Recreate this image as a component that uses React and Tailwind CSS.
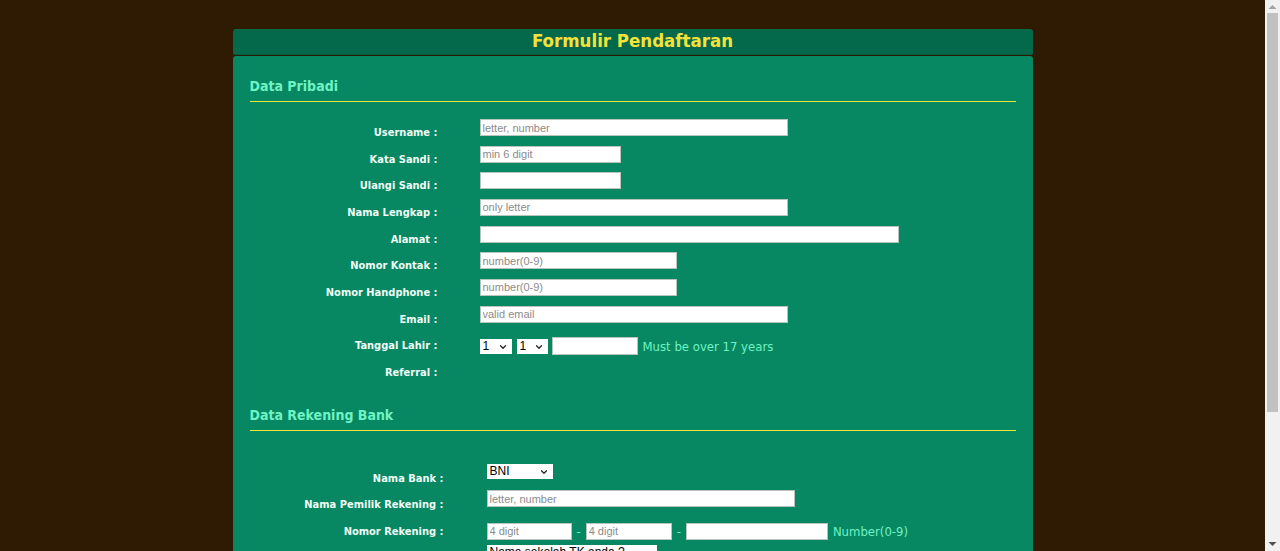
import { ChevronDown } from 'lucide-react';

const tahoma = { fontFamily: '"DejaVu Sans Condensed", "DejaVu Sans", sans-serif' };

const Select = ({ value, width }) => (
    <div className={`relative inline-flex items-center bg-white h-[15px] ${width}`}>
        <span className="pl-[3px] text-[12px] leading-none text-black font-['Liberation_Sans',sans-serif] whitespace-nowrap">{value}</span>
        <ChevronDown size={10} strokeWidth={3} className="absolute right-[4px] top-[3px] text-neutral-800" />
    </div>
);

const Input = ({ placeholder = '', width, height = 'h-[17px]' }) => (
    <input
        type="text"
        placeholder={placeholder}
        className={`${width} ${height} bg-white border border-[#b9c4bd] px-[2px] text-[11px] text-black placeholder:text-[#8c8c8c] font-['Liberation_Sans',sans-serif] outline-none`}
    />
);

const Row = ({ label, labelWidth, children, controlTop = 'mt-[3px]', labelTop = 'pt-[10px]', height = 'h-[26.67px]' }) => (
    <div className={`flex items-start ${height}`}>
        <div
            style={tahoma}
            className={`${labelWidth} ${labelTop} shrink-0 text-right text-[11px] leading-[13px] font-bold text-[#f0fcf6]`}
        >
            {label}
        </div>
        <div className={`flex items-center gap-[5px] ${controlTop}`}>{children}</div>
    </div>
);

const SectionTitle = ({ children }) => (
    <div className="border-b border-[#e8e83a] pb-[7px]">
        <h2 style={tahoma} className="text-[14px] leading-[16px] font-bold text-[#6ff3c3]">{children}</h2>
    </div>
);

const Scrollbar = () => (
    <div className="w-[15px] shrink-0 h-full bg-[#f1f1f1] flex flex-col items-center">
        <svg width="15" height="13" viewBox="0 0 15 13" className="shrink-0">
            <path d="M3.5 9 L7.5 5 L11.5 9 Z" fill="#a3a3a3" />
        </svg>
        <div className="w-[11px] h-[399px] bg-[#c1c1c1]" />
        <div className="flex-1" />
        <svg width="15" height="13" viewBox="0 0 15 13" className="shrink-0">
            <path d="M3.5 4 L7.5 8 L11.5 4 Z" fill="#505050" />
        </svg>
    </div>
);

export default function App() {
    return (
        <div className="h-[551px] flex overflow-hidden bg-[#2f1a04]">
            <div className="flex-1 overflow-hidden pt-[29px]">
                <div className="w-[800px] mx-auto">
                    {/* Header */}
                    <div className="h-[26px] rounded-t-[3px] rounded-b-[2px] bg-[#04694a] border-b border-[#045c40] flex items-center justify-center">
                        <h1 style={tahoma} className="text-[18.5px] leading-none font-bold text-[#f4e23a]">
                            Formulir Pendaftaran
                        </h1>
                    </div>

                    {/* Body */}
                    <div className="mt-[1px] rounded-t-[3px] bg-[#078762] px-[17px] pt-[22px] pb-10">
                        <SectionTitle>Data Pribadi</SectionTitle>

                        <div className="mt-[14px]">
                            <Row label="Username :" labelWidth="w-[230px] pr-[42px]">
                                <Input placeholder="letter, number" width="w-[308px]" />
                            </Row>
                            <Row label="Kata Sandi :" labelWidth="w-[230px] pr-[42px]">
                                <Input placeholder="min 6 digit" width="w-[141px]" />
                            </Row>
                            <Row label="Ulangi Sandi :" labelWidth="w-[230px] pr-[42px]">
                                <Input width="w-[141px]" />
                            </Row>
                            <Row label="Nama Lengkap :" labelWidth="w-[230px] pr-[42px]">
                                <Input placeholder="only letter" width="w-[308px]" />
                            </Row>
                            <Row label="Alamat :" labelWidth="w-[230px] pr-[42px]">
                                <Input width="w-[419px]" />
                            </Row>
                            <Row label="Nomor Kontak :" labelWidth="w-[230px] pr-[42px]">
                                <Input placeholder="number(0-9)" width="w-[197px]" />
                            </Row>
                            <Row label="Nomor Handphone :" labelWidth="w-[230px] pr-[42px]">
                                <Input placeholder="number(0-9)" width="w-[197px]" />
                            </Row>
                            <Row label="Email :" labelWidth="w-[230px] pr-[42px]">
                                <Input placeholder="valid email" width="w-[308px]" />
                            </Row>
                            <Row label="Tanggal Lahir :" labelWidth="w-[230px] pr-[42px]" controlTop="mt-[8px]">
                                <Select value="1" width="w-[32px]" />
                                <Select value="1" width="w-[31px]" />
                                <Input width="w-[86px] -ml-[1px]" height="h-[18px]" />
                                <span style={tahoma} className="text-[13px] leading-none text-[#6ff3c3]">
                                    Must be over 17 years
                                </span>
                            </Row>
                            <Row label="Referral :" labelWidth="w-[230px] pr-[42px]" />
                        </div>

                        <div className="mt-[24px]">
                            <SectionTitle>Data Rekening Bank</SectionTitle>
                        </div>

                        <div className="mt-[31px]">
                            <Row label="Nama Bank :" labelWidth="w-[237px] pr-[43px]" controlTop="mt-[2px]">
                                <Select value="BNI" width="w-[66px]" />
                            </Row>
                            <Row label="Nama Pemilik Rekening :" labelWidth="w-[237px] pr-[43px]" controlTop="mt-[2px]">
                                <Input placeholder="letter, number" width="w-[308px]" />
                            </Row>
                            <Row label="Nomor Rekening :" labelWidth="w-[237px] pr-[43px]" controlTop="mt-[8px]">
                                <Input placeholder="4 digit" width="w-[85px]" />
                                <span className="text-[13px] leading-none text-[#6ff3c3]">-</span>
                                <Input placeholder="4 digit" width="w-[86px]" />
                                <span className="text-[13px] leading-none text-[#6ff3c3]">-</span>
                                <Input width="w-[142px]" />
                                <span style={tahoma} className="text-[13px] leading-none text-[#6ff3c3]">
                                    Number(0-9)
                                </span>
                            </Row>
                            <Row
                                label="Pertanyaan Keamanan :"
                                labelWidth="w-[237px] pr-[43px]"
                                controlTop="mt-[3px]"
                                labelTop="pt-[24px]"
                                height="h-[50px]"
                            >
                                <Select value="Nama sekolah TK anda ?" width="w-[170px]" />
                            </Row>
                            <Row label="Jawaban :" labelWidth="w-[237px] pr-[43px]">
                                <Input width="w-[308px]" />
                            </Row>
                        </div>
                    </div>
                </div>
            </div>
            <Scrollbar />
        </div>
    );
}
